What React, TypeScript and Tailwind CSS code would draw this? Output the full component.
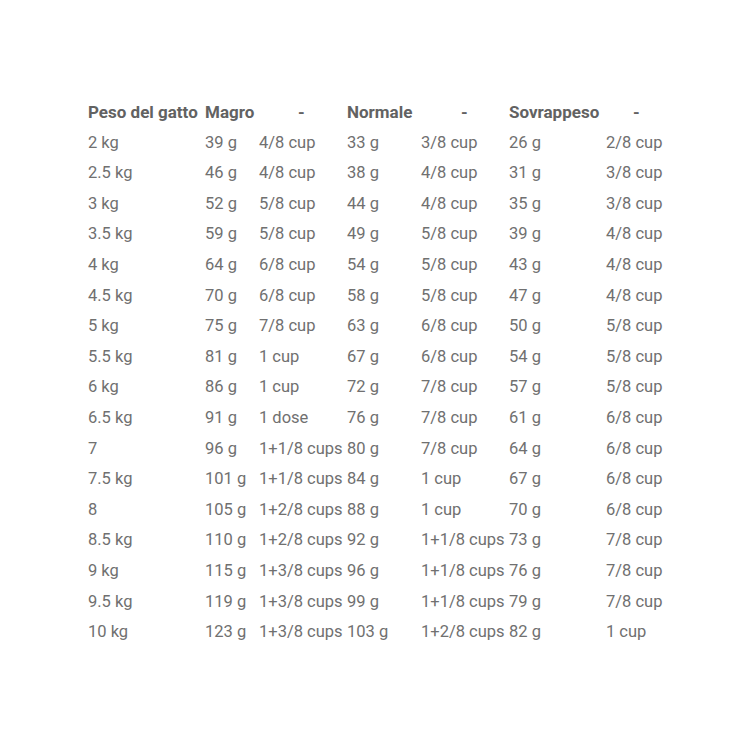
import React from "react";

const rows: string[][] = [
  ["2 kg", "39 g", "4/8 cup", "33 g", "3/8 cup", "26 g", "2/8 cup"],
  ["2.5 kg", "46 g", "4/8 cup", "38 g", "4/8 cup", "31 g", "3/8 cup"],
  ["3 kg", "52 g", "5/8 cup", "44 g", "4/8 cup", "35 g", "3/8 cup"],
  ["3.5 kg", "59 g", "5/8 cup", "49 g", "5/8 cup", "39 g", "4/8 cup"],
  ["4 kg", "64 g", "6/8 cup", "54 g", "5/8 cup", "43 g", "4/8 cup"],
  ["4.5 kg", "70 g", "6/8 cup", "58 g", "5/8 cup", "47 g", "4/8 cup"],
  ["5 kg", "75 g", "7/8 cup", "63 g", "6/8 cup", "50 g", "5/8 cup"],
  ["5.5 kg", "81 g", "1 cup", "67 g", "6/8 cup", "54 g", "5/8 cup"],
  ["6 kg", "86 g", "1 cup", "72 g", "7/8 cup", "57 g", "5/8 cup"],
  ["6.5 kg", "91 g", "1 dose", "76 g", "7/8 cup", "61 g", "6/8 cup"],
  ["7", "96 g", "1+1/8 cups", "80 g", "7/8 cup", "64 g", "6/8 cup"],
  ["7.5 kg", "101 g", "1+1/8 cups", "84 g", "1 cup", "67 g", "6/8 cup"],
  ["8", "105 g", "1+2/8 cups", "88 g", "1 cup", "70 g", "6/8 cup"],
  ["8.5 kg", "110 g", "1+2/8 cups", "92 g", "1+1/8 cups", "73 g", "7/8 cup"],
  ["9 kg", "115 g", "1+3/8 cups", "96 g", "1+1/8 cups", "76 g", "7/8 cup"],
  ["9.5 kg", "119 g", "1+3/8 cups", "99 g", "1+1/8 cups", "79 g", "7/8 cup"],
  ["10 kg", "123 g", "1+3/8 cups", "103 g", "1+2/8 cups", "82 g", "1 cup"],
];

export default function App() {
  return (
    <div
      className="w-[751px] h-[751px] bg-white pt-[97px] pl-[88px] text-[16.5px] leading-[30.6px] text-[#707070]"
      style={{ fontFamily: "Roboto, 'Liberation Sans', sans-serif" }}
    >
      <table className="table-fixed border-collapse w-[580px]">
        <colgroup>
          <col className="w-[117px]" />
          <col className="w-[54px]" />
          <col className="w-[88px]" />
          <col className="w-[74px]" />
          <col className="w-[88px]" />
          <col className="w-[97px]" />
          <col className="w-[62px]" />
        </colgroup>
        <thead>
          <tr className="font-bold text-[17px] text-[#626262]">
            <th className="p-0 text-left font-bold whitespace-nowrap">Peso del gatto</th>
            <th className="p-0 text-left font-bold whitespace-nowrap">Magro</th>
            <th className="p-0 pl-[39px] text-left font-bold">-</th>
            <th className="p-0 text-left font-bold whitespace-nowrap">Normale</th>
            <th className="p-0 pl-[40px] text-left font-bold">-</th>
            <th className="p-0 text-left font-bold whitespace-nowrap">Sovrappeso</th>
            <th className="p-0 pl-[27px] text-left font-bold">-</th>
          </tr>
        </thead>
        <tbody>
          {rows.map((r, i) => (
            <tr key={i}>
              {r.map((c, j) => (
                <td key={j} className="p-0 text-left whitespace-nowrap">
                  {c}
                </td>
              ))}
            </tr>
          ))}
        </tbody>
      </table>
    </div>
  );
}
